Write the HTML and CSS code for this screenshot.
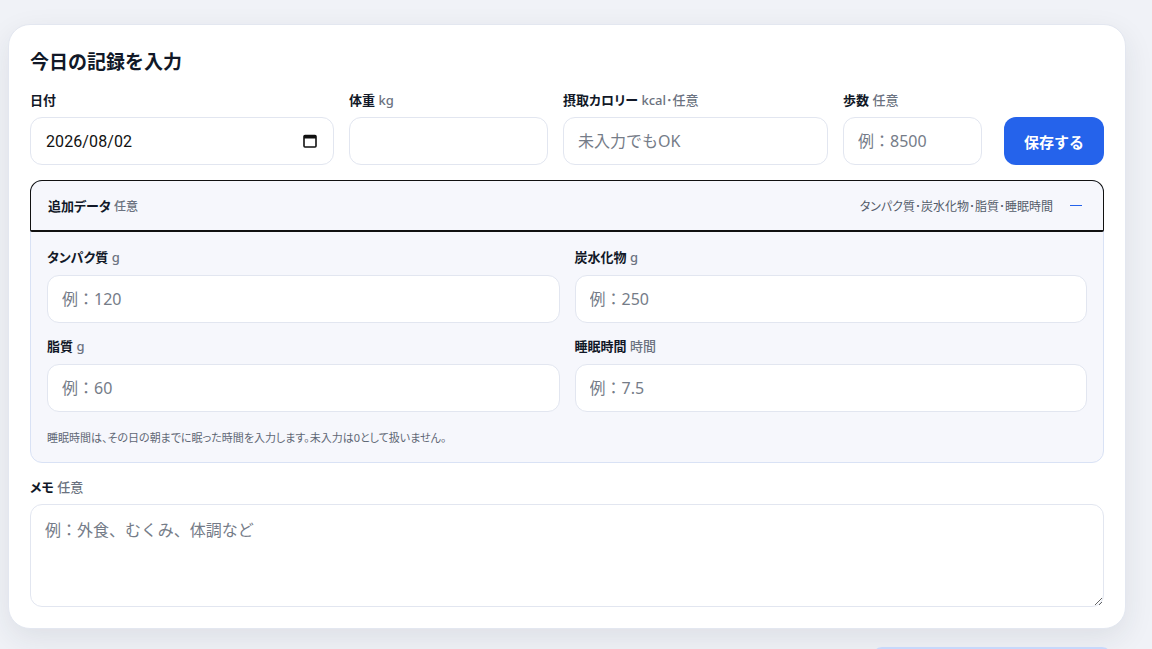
FILE: index.html
```html
<!DOCTYPE html>
<html lang="ja">
<head>
  <meta charset="UTF-8">
  <meta name="viewport" content="width=device-width, initial-scale=1.0">
  <title>今日の記録</title>
  <link rel="stylesheet" href="styles.css">
</head>
<body>

  <div class="page">
    <section class="card">
      <h1>今日の記録を入力</h1>

      <!-- 基本の記録 -->
      <form class="main-row" id="recordForm">
        <div class="field">
          <label for="date">日付</label>
          <div class="input date-box">
            <input type="text" id="date" class="date-text" value="2026/08/02">
            <svg class="cal-icon" width="14" height="14" viewBox="0 0 14 14">
              <rect x="1" y="1.5" width="12" height="11.5" rx="1" fill="none" stroke="#111" stroke-width="1.6"/>
              <rect x="1" y="1.5" width="12" height="3" fill="#111"/>
            </svg>
          </div>
        </div>
        <div class="field">
          <label for="weight">体重 <span class="sub">kg</span></label>
          <input type="number" id="weight" class="input">
        </div>
        <div class="field">
          <label for="kcal">摂取カロリー <span class="sub">kcal･任意</span></label>
          <input type="number" id="kcal" class="input" placeholder="未入力でもOK">
        </div>
        <div class="field">
          <label for="steps">歩数 <span class="sub">任意</span></label>
          <input type="number" id="steps" class="input" placeholder="例：8500">
        </div>
        <button type="submit" class="btn">保存する</button>
      </form>

      <!-- 追加データ -->
      <details class="extra" open>
        <summary class="extra-head">
          <span class="extra-title">追加データ <span class="sub">任意</span></span>
          <span class="extra-hint">タンパク質･炭水化物･脂質･睡眠時間</span>
          <span class="toggle"></span>
        </summary>
        <div class="extra-body">
          <div class="extra-grid">
            <div class="field">
              <label for="protein">タンパク質 <span class="sub">g</span></label>
              <input type="number" id="protein" class="input" placeholder="例：120">
            </div>
            <div class="field">
              <label for="carbs">炭水化物 <span class="sub">g</span></label>
              <input type="number" id="carbs" class="input" placeholder="例：250">
            </div>
            <div class="field">
              <label for="fat">脂質 <span class="sub">g</span></label>
              <input type="number" id="fat" class="input" placeholder="例：60">
            </div>
            <div class="field">
              <label for="sleep">睡眠時間 <span class="sub">時間</span></label>
              <input type="number" id="sleep" class="input" placeholder="例：7.5">
            </div>
          </div>
          <p class="note">睡眠時間は、その日の朝までに眠った時間を入力します。未入力は0として扱いません。</p>
        </div>
      </details>

      <div class="field memo">
        <label for="memo">メモ <span class="sub">任意</span></label>
        <textarea id="memo" class="input textarea" placeholder="例：外食、むくみ、体調など"></textarea>
      </div>
    </section>

    <div class="next-row">
      <div class="next-box"></div>
    </div>
  </div>

</body>
</html>
```

FILE: styles.css
```css
* {
  box-sizing: border-box;
}
body {
  margin: 0;
  font-family: "Noto Sans", "Noto Sans CJK JP", sans-serif;
  background-color: #f0f2f7;
  color: #111827;
  overflow: hidden;
}
.page {
  padding: 24px 26px 0 8px;
}
.card {
  background-color: #fff;
  border: 1px solid #e3e7f0;
  border-radius: 22px;
  padding: 20px 21px 21px 21px;
  box-shadow: 0 10px 30px rgba(30, 41, 59, 0.09);
}
h1 {
  font-size: 19px;
  font-weight: 700;
  margin: 0 0 13px 0;
  line-height: 34px;
  color: #111827;
}
.field {
  display: flex;
  flex-direction: column;
  gap: 8px;
}
.field label {
  font-size: 13px;
  font-weight: 700;
  line-height: 17px;
  color: #111827;
  font-feature-settings: "palt";
}
.sub {
  color: #6b7280;
  font-weight: 500;
}
.input {
  height: 48px;
  width: 100%;
  border: 1px solid #e2e6f0;
  border-radius: 12px;
  background-color: #fff;
  padding: 0 14px;
  font-family: inherit;
  font-size: 16px;
  color: #111827;
  outline: none;
}
.input::placeholder {
  color: #757c88;
}
.date-box {
  display: flex;
  align-items: center;
  padding: 0 16px 0 15px;
}
.date-text {
  flex: 1;
  min-width: 0;
  border: none;
  outline: none;
  padding: 0;
  font-family: "Roboto", sans-serif;
  font-size: 16px;
  letter-spacing: 0.1px;
  color: #111;
  background: transparent;
}
.cal-icon {
  flex-shrink: 0;
}
.main-row {
  display: grid;
  grid-template-columns: 304fr 199fr 265fr 139fr 107px;
  column-gap: 15px;
  align-items: end;
  margin: 0;
}
.btn {
  justify-self: end;
  height: 48px;
  width: 100px;
  background-color: #2563eb;
  color: #fff;
  border: none;
  border-radius: 12px;
  font-family: inherit;
  font-size: 15px;
  font-weight: 700;
  cursor: pointer;
}
.btn:hover {
  background-color: #1d4ed8;
}
.extra {
  margin-top: 15px;
  background-color: #f6f7fc;
  border: 1px solid #d9e2f5;
  border-radius: 12px;
}
.extra-head {
  list-style: none;
  display: flex;
  align-items: center;
  height: 52px;
  margin: -1px -1px 0 -1px;
  padding: 0 17px;
  font-size: 13px;
  cursor: pointer;
  border: 1px solid #111;
  border-bottom-width: 2px;
  border-radius: 12px 12px 2px 2px;
  font-feature-settings: "palt";
}
.extra-head::-webkit-details-marker {
  display: none;
}
.extra-title {
  font-weight: 700;
}
.extra-title .sub {
  font-size: 12px;
  font-weight: 500;
}
.extra-hint {
  margin-left: auto;
  font-size: 12px;
  color: #545c6a;
}
.toggle {
  width: 12px;
  height: 1.5px;
  margin-left: 17px;
  margin-right: 4px;
  background-color: #2563eb;
}
.extra-body {
  padding: 17px 16px 17px 16px;
}
.extra-grid {
  display: grid;
  grid-template-columns: 1fr 1fr;
  gap: 15px 15px;
}
.extra-grid .field {
  gap: 9px;
}
.note {
  margin: 17px 0 0 0;
  font-size: 11px;
  color: #5f6775;
  font-feature-settings: "palt";
}
.memo {
  margin-top: 16px;
}
.textarea {
  height: 103px;
  padding: 12px 14px;
  resize: vertical;
  display: block;
}
.next-row {
  display: flex;
  justify-content: flex-end;
  padding-right: 14px;
  margin-top: 18px;
}
.next-box {
  width: 240px;
  height: 20px;
  border-top: 2px solid #c7d8fb;
  border-radius: 10px 10px 0 0;
  background-color: #eef2fb;
}
```
